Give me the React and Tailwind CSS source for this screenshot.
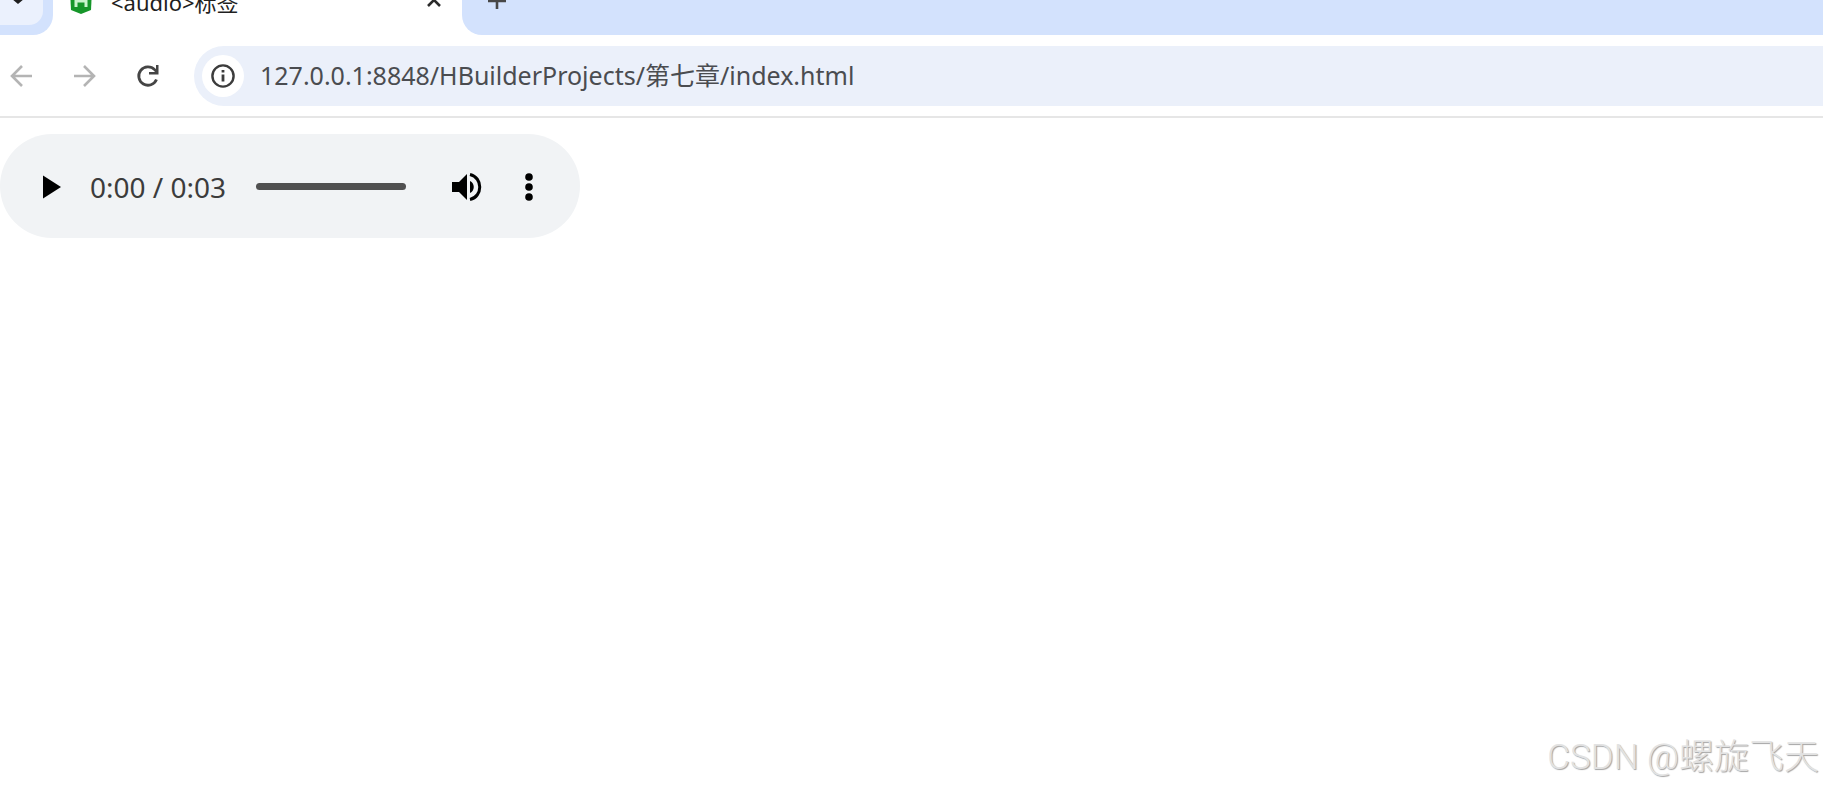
import React, { useState } from "react";

const uiFont = "font-['Noto_Sans','Noto_Sans_CJK_SC',sans-serif]";

function TabStrip() {
  return (
    <div className="h-[35px] overflow-hidden">
      {/* only the lower half of the strip is visible */}
      <div className="-mt-[35px] flex h-[70px]">
        <div className="flex w-[53px] items-center rounded-br-[20px] bg-[#d3e2fd]">
          <button
            aria-label="Search tabs"
            className="flex h-[50px] w-[43px] items-center justify-center rounded-r-[14px] bg-[#ebf1fd] pr-2"
          >
            <svg width="20" height="20" viewBox="0 0 20 20" fill="none">
              <path d="M4 -2l6 5 6-5" stroke="#1f1f1f" strokeWidth="3" transform="translate(0 9)" />
            </svg>
          </button>
        </div>

        <div className="flex w-[409px] items-center pt-1 pr-[18px] pl-4">
          <svg width="24" height="24" viewBox="0 0 24 24">
            <path d="M1 0h22l-1 20-10 4-10-4z" fill="#16962a" />
            <path
              d="M7 2v15M17 2v15M7 11h10"
              stroke="#c9f3cd"
              strokeWidth="3"
              fill="none"
            />
          </svg>
          <span className="ml-[18px] flex-1 text-[22px] leading-6 text-[#1f1f1f]">
            &lt;audio&gt;标签
          </span>
          <button aria-label="Close tab">
            <svg width="20" height="20" viewBox="0 0 20 20" fill="none">
              <path d="M4 2l12 12M16 2L4 14" stroke="#2b2b2b" strokeWidth="2.6" />
            </svg>
          </button>
        </div>

        <div className="flex flex-1 items-center rounded-bl-[20px] bg-[#d3e2fd] pl-6">
          <button aria-label="New tab">
            <svg width="22" height="22" viewBox="0 0 22 22" fill="none">
              <path d="M2 12h18M11 3v17" stroke="#474747" strokeWidth="2.6" />
            </svg>
          </button>
        </div>
      </div>
    </div>
  );
}

function Toolbar() {
  const [url, setUrl] = useState("127.0.0.1:8848/HBuilderProjects/第七章/index.html");

  return (
    <div className="flex h-[83px] items-center border-b-2 border-[#e6e6e6]">
      <div className="flex items-center gap-10 pr-[34px] pl-[10px]">
        <button aria-label="Back">
          <svg width="23" height="24" viewBox="0 0 23 24" fill="none">
            <path d="M12 2L2 12l10 10M2 12h20" stroke="#b4b4b4" strokeWidth="2.6" />
          </svg>
        </button>
        <button aria-label="Forward">
          <svg width="23" height="24" viewBox="0 0 23 24" fill="none">
            <path d="M11 2l10 10-10 10M21 12H1" stroke="#b4b4b4" strokeWidth="2.6" />
          </svg>
        </button>
        <button aria-label="Reload">
          <svg width="24" height="24" viewBox="0 0 24 24" fill="none">
            <path
              d="M20.500 15.500A9.200 9.200 0 1 1 18.600 5.600L21 8"
              stroke="#454545"
              strokeWidth="2.8"
            />
            <path d="M22.500 1v9.500H13V8h7V1z" fill="#454545" />
          </svg>
        </button>
      </div>

      <div className="flex h-[60px] flex-1 items-center rounded-l-full bg-[#ebf0fa] pl-2">
        <button
          aria-label="Site information"
          className="flex size-[42px] items-center justify-center rounded-full bg-white"
        >
          <svg width="24" height="24" viewBox="0 0 24 24" fill="none">
            <circle cx="12" cy="12" r="10.6" stroke="#3c3c3c" strokeWidth="2.4" />
            <path d="M12 10.500v7M12 6v2.600" stroke="#3c3c3c" strokeWidth="2.8" />
          </svg>
        </button>
        <input
          type="text"
          aria-label="Address"
          value={url}
          onChange={(e) => setUrl(e.target.value)}
          className="ml-4 min-w-0 flex-1 bg-transparent pb-0.5 text-[25px] leading-8 text-[#4a4c50] outline-none"
        />
      </div>
    </div>
  );
}

function AudioPlayer() {
  const [time, setTime] = useState(0);

  return (
    <div className="mt-4 flex h-[104px] w-[580px] items-center rounded-full bg-[#f1f3f5] pt-px pl-[42px]">
      <button aria-label="Play">
        <svg width="20" height="24" viewBox="0 0 20 24">
          <path d="M1 0.500v23L19 12z" fill="#000" />
        </svg>
      </button>
      <span className="ml-7 w-[138px] text-[28px] leading-8 whitespace-nowrap text-[#3c3c3c]">
        0:00 / 0:03
      </span>
      <input
        type="range"
        aria-label="Playback position"
        min="0"
        max="3"
        value={time}
        onChange={(e) => setTime(Number(e.target.value))}
        className="ml-7 h-[7px] w-[150px] appearance-none rounded-full bg-[#505050] [&::-webkit-slider-thumb]:size-0 [&::-webkit-slider-thumb]:appearance-none"
      />
      <button aria-label="Mute" className="ml-[45px]">
        <svg width="32" height="30" viewBox="0 0 32 30">
          <path d="M1 10h7l8-8v26l-8-8H1z" fill="#000" />
          <path d="M19 9c5 2 5 10 0 12z" fill="#000" />
          <path
            d="M19 2.500c13 3 13 22 0 25"
            stroke="#000"
            strokeWidth="3"
            fill="none"
          />
        </svg>
      </button>
      <button aria-label="More options" className="ml-[41px]">
        <svg width="10" height="30" viewBox="0 0 10 30">
          <circle cx="5" cy="5" r="3.8" />
          <circle cx="5" cy="15" r="3.8" />
          <circle cx="5" cy="25" r="3.8" />
        </svg>
      </button>
    </div>
  );
}

function App() {
  return (
    <div className={`relative min-h-screen overflow-hidden bg-white ${uiFont}`}>
      <TabStrip />
      <Toolbar />
      <AudioPlayer />
      <div className="absolute right-1 bottom-1.5 font-['Roboto','Noto_Sans_CJK_SC',sans-serif] text-[35px] leading-[48px] font-light text-[#e2e2e2] [text-shadow:1px_1px_1px_#a3a3a3]">
        CSDN @螺旋飞天
      </div>
    </div>
  );
}

export default App;
